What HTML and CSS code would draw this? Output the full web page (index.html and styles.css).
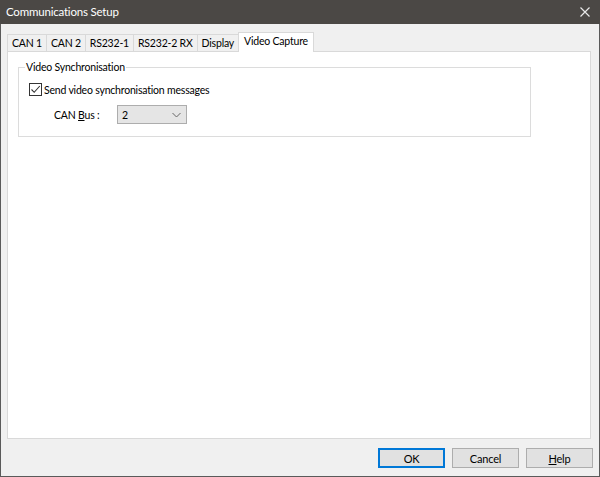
FILE: index.html
```html
<!DOCTYPE html>
<html lang="en">
<head>
    <meta charset="UTF-8">
    <title>Communications Setup</title>
    <link rel="stylesheet" href="styles.css">
</head>
<body>
    <div class="window">
        <div class="titlebar">
            <span class="title">Communications Setup</span>
            <svg class="close" width="10" height="10" viewBox="0 0 10 10">
                <path d="M0.5 0.5 L9.5 9.5 M9.5 0.5 L0.5 9.5" stroke="#e8e8e8" stroke-width="1.2" fill="none"/>
            </svg>
        </div>

        <div class="content">
            <div class="tabs">
                <div class="tab">CAN 1</div>
                <div class="tab">CAN 2</div>
                <div class="tab">RS232-1</div>
                <div class="tab">RS232-2 RX</div>
                <div class="tab">Display</div>
                <div class="tab active">Video Capture</div>
            </div>

            <div class="panel">
                <fieldset class="group">
                    <legend>Video Synchronisation</legend>
                    <label class="check">
                        <span class="box">
                            <svg width="11" height="11" viewBox="0 0 11 11">
                                <path d="M1.5 5.5 L4.2 8.3 L9.8 2" stroke="#333" stroke-width="1.1" fill="none"/>
                            </svg>
                        </span>
                        Send video synchronisation messages
                    </label>
                    <div class="field">
                        <span class="field-label">CAN <u>B</u>us :</span>
                        <div class="combo">
                            <span>2</span>
                            <svg width="9" height="6" viewBox="0 0 9 6">
                                <path d="M0.5 1 L4.5 5 L8.5 1" stroke="#666" stroke-width="1" fill="none"/>
                            </svg>
                        </div>
                    </div>
                </fieldset>
            </div>

            <div class="buttons">
                <button class="btn default">OK</button>
                <button class="btn">Cancel</button>
                <button class="btn"><u>H</u>elp</button>
            </div>
        </div>
    </div>
</body>
</html>
```

FILE: styles.css
```css
body {
    margin: 0;
    font-family: Lato, 'Noto Sans', sans-serif;
    font-size: 10.5px;
    letter-spacing: -0.2px;
    color: #000;
    background-color: #f0f0f0;
}

.window {
    width: 600px;
    height: 477px;
    box-sizing: border-box;
    display: flex;
    flex-direction: column;
    border: 1px solid #5a5a5a;
    border-top: none;
    background-color: #f0f0f0;
}

.titlebar {
    height: 23px;
    margin: 0 -1px;
    background-color: #4b4845;
    color: #ffffff;
    display: flex;
    align-items: center;
    justify-content: space-between;
    padding: 0 10px 1px 6px;
    font-size: 11.5px;
}

.close {
    margin-top: 1px;
}

.content {
    flex: 1;
    display: flex;
    flex-direction: column;
    padding: 8px 8px 8px 6px;
}

.tabs {
    display: flex;
    height: 19px;
    align-items: flex-end;
}

.tab {
    height: 17px;
    box-sizing: border-box;
    padding: 0 4px;
    line-height: 16px;
    border: 1px solid #d9d9d9;
    border-bottom: none;
    border-right: none;
    background-color: #f0f0f0;
}

.tab.active {
    height: 20px;
    margin-bottom: -1px;
    background-color: #ffffff;
    border-right: 1px solid #d9d9d9;
    padding: 0 5px;
    line-height: 17px;
    position: relative;
    z-index: 1;
}

.panel {
    flex: 1;
    background-color: #ffffff;
    border: 1px solid #d9d9d9;
    padding: 8px 59px 0 10px;
}

.group {
    margin: 0;
    height: 77px;
    box-sizing: border-box;
    border: 1px solid #dcdcdc;
    padding: 0 0 0 10px;
}

.group legend {
    padding: 0 1px;
    margin-left: -4px;
    line-height: 14px;
}

.check {
    display: flex;
    align-items: center;
    gap: 2px;
    height: 13px;
    margin-top: 9px;
}

.box {
    width: 11px;
    height: 11px;
    border: 1px solid #333;
    display: flex;
    align-items: center;
    justify-content: center;
}

.field {
    display: flex;
    align-items: center;
    margin-top: 9px;
    padding-left: 25px;
}

.field-label {
    width: 63px;
}

.combo {
    width: 70px;
    height: 19px;
    box-sizing: border-box;
    border: 1px solid #adadad;
    background-color: #e5e5e5;
    display: flex;
    align-items: center;
    justify-content: space-between;
    padding: 0 5px 0 4px;
}

.buttons {
    display: flex;
    justify-content: flex-end;
    gap: 7px;
    padding-top: 9px;
    height: 20px;
    margin-right: -2px;
}

.btn {
    width: 67px;
    height: 20px;
    font-family: inherit;
    font-size: 11px;
    letter-spacing: -0.2px;
    padding: 0;
    border: 1px solid #adadad;
    background-color: #e1e1e1;
    color: #000;
}

.btn.default {
    border: 2px solid #0078d7;
}
```
